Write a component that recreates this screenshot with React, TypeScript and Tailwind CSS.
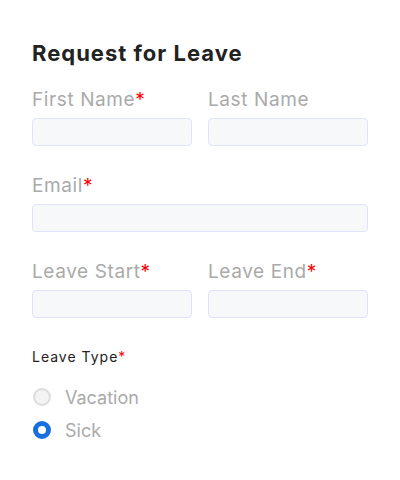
import React from "react";

function Req() {
  return <span className="text-[#ff0000]">*</span>;
}

function Field({ label, required }: { label: string; required?: boolean }) {
  return (
    <div className="flex flex-col flex-1 min-w-0">
      <div className="text-[19px] leading-[27px] tracking-[0.6px] text-[#aaaaaa] mb-[5px]">
        {label}
        {required && <Req />}
      </div>
      <div className="h-[28px] rounded-[4px] border border-[#dfe4fb] bg-[#f7f8fa]" />
    </div>
  );
}

export default function App() {
  return (
    <div
      className="w-[400px] h-[480px] bg-white px-8 pt-[39px]"
      style={{ fontFamily: "Inter, 'Liberation Sans', sans-serif" }}
    >
      <h1 className="text-[22px] leading-[28px] tracking-[1px] font-bold text-[#222222] mb-[19px]">
        Request for Leave
      </h1>
      <div className="flex gap-4 mb-[26px]">
        <Field label="First Name" required />
        <Field label="Last Name" />
      </div>
      <div className="flex mb-[26px]">
        <Field label="Email" required />
      </div>
      <div className="flex gap-4 mb-[29px]">
        <Field label="Leave Start" required />
        <Field label="Leave End" required />
      </div>
      <div className="text-[14px] leading-[20px] tracking-[1px] text-[#222222]">
        Leave Type
        <Req />
      </div>
      <div className="flex flex-col gap-[5px] mt-[16px]">
        <div className="flex items-center h-[28px]">
          <span className="ml-px w-[18px] h-[18px] rounded-full border-2 border-[#dcdcdc] bg-[#f3f3f3]" />
          <span className="ml-[14px] text-[18px] text-[#aaaaaa]">Vacation</span>
        </div>
        <div className="flex items-center h-[28px]">
          <span className="ml-px w-[18px] h-[18px] rounded-full border-[5px] border-[#1a6fe0] bg-white" />
          <span className="ml-[14px] text-[18px] text-[#aaaaaa]">Sick</span>
        </div>
      </div>
    </div>
  );
}
